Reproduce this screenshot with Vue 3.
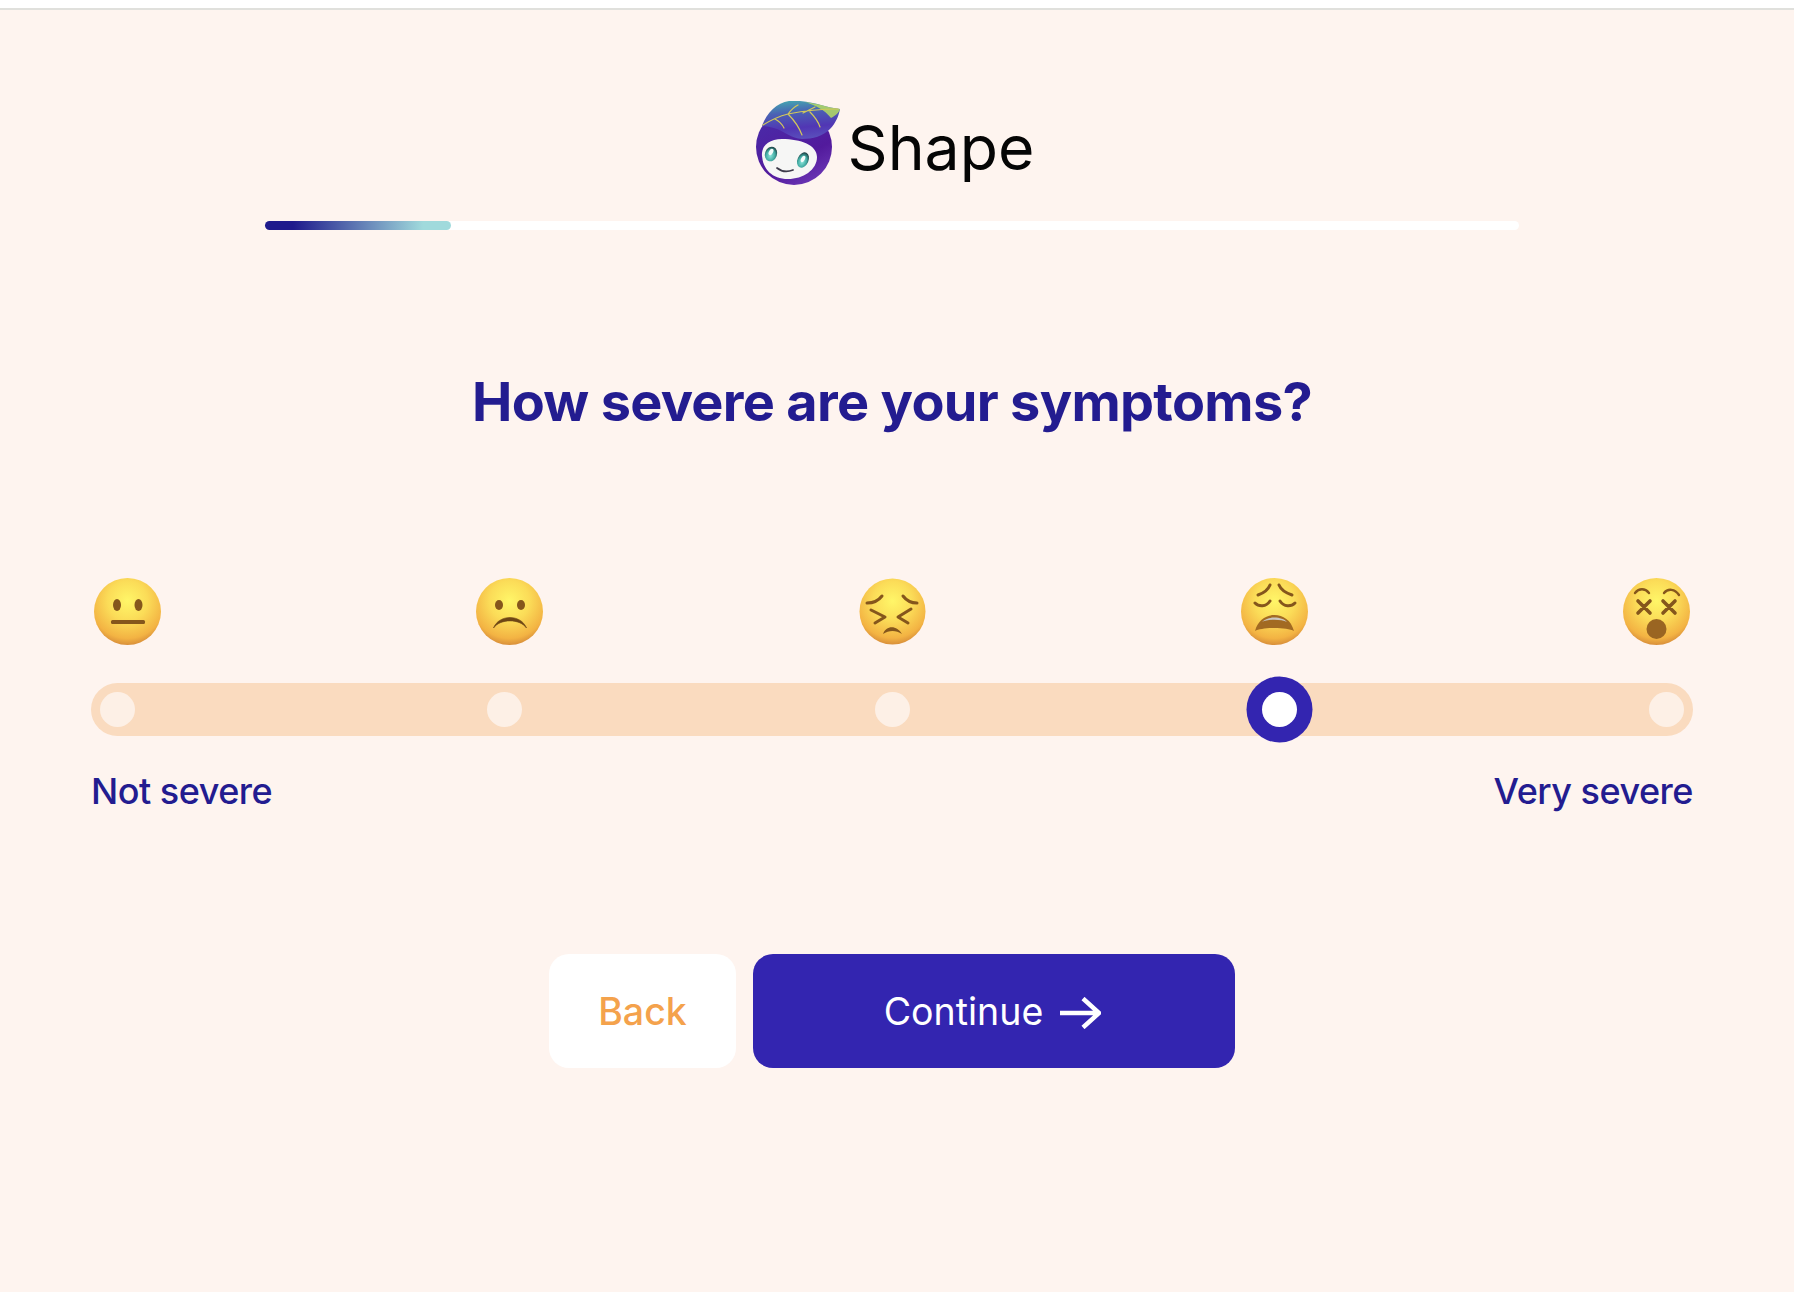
<script setup>
const dots = [0, 1, 2, 3, 4]
const activeDot = 3
</script>

<template>
  <div class="page">
    <div class="topbar"></div>
    <main class="main">
      <header class="brand">
        <svg class="logo" viewBox="0 0 85 84" width="85" height="84" aria-hidden="true">
          <defs>
            <linearGradient id="ballG" x1="0.2" y1="0.1" x2="0.7" y2="1">
              <stop offset="0" stop-color="#4a2aa8" />
              <stop offset="0.65" stop-color="#521a9c" />
              <stop offset="1" stop-color="#6a35b4" />
            </linearGradient>
            <linearGradient id="leafG" x1="0.35" y1="0" x2="0.55" y2="1">
              <stop offset="0" stop-color="#45a3b0" />
              <stop offset="0.3" stop-color="#4a62b4" />
              <stop offset="0.7" stop-color="#5136b4" />
              <stop offset="1" stop-color="#5a50bc" />
            </linearGradient>
            <radialGradient id="eyeG" cx="0.5" cy="0.62" r="0.6">
              <stop offset="0" stop-color="#8ce6dc" />
              <stop offset="0.65" stop-color="#3fa8a0" />
              <stop offset="1" stop-color="#1c3f42" />
            </radialGradient>
          </defs>
          <circle cx="39" cy="46" r="38" fill="url(#ballG)" />
          <path d="M7 25 C12 11 22 2 34 0 C48 -1 58 2 66 4 C72 6 79 7 85 8 C84 14 81 22 75 28 C68 35 58 38 47 38 C36 37 30 31 22 28 C16 26 11 25 7 25Z" fill="url(#leafG)" />
          <path d="M85 8 C79 7 72 6 66 4 C62 3 56 2 50 1 C60 4 70 9 76 17 C80 15 84 12 85 8Z" fill="#b4dc62" opacity=".85" />
          <path d="M8 24 C16 19 25 15 33 13 C48 10 66 8 83 8 M33 13 C36 9 39 6 43 4 M33 13 C39 19 44 26 47 34 M48 12 C52 10 56 8 60 6 M55 11 C59 15 63 20 65 26 M20 18 C24 20 27 23 29 27" fill="none" stroke="#d2c85a" stroke-width="1.200" stroke-linecap="round" />
          <path d="M7 55 C6 45 14 38 27 38 C46 38 62 44 62 56 C62 69 48 78 33 78 C17 78 8 68 7 55Z" fill="#f6f6f5" />
          <ellipse cx="16" cy="53" rx="6" ry="7.500" transform="rotate(20 16 53)" fill="url(#eyeG)" />
          <ellipse cx="16" cy="51" rx="2" ry="3.400" transform="rotate(30 16 51)" fill="#f3fbfa" />
          <ellipse cx="48" cy="59" rx="5.500" ry="8" transform="rotate(25 48 59)" fill="url(#eyeG)" />
          <ellipse cx="48" cy="58" rx="1.800" ry="3.400" transform="rotate(30 48 58)" fill="#f3fbfa" />
          <path d="M22 67 C27 71 33 71 38 69" fill="none" stroke="#3d3a4a" stroke-width="1.700" stroke-linecap="round" />
        </svg>
        <span class="brand-name">Shape</span>
      </header>

      <div class="progress">
        <div class="progress-fill"></div>
      </div>

      <h1 class="title">How severe are your symptoms?</h1>

      <div class="emojis">
        <svg class="emoji" viewBox="0 0 67 67" aria-hidden="true">
          <defs>
            <radialGradient id="faceG" cx="0.5" cy="0.34" r="0.66">
              <stop offset="0" stop-color="#fff668" />
              <stop offset="0.45" stop-color="#fbdc58" />
              <stop offset="0.85" stop-color="#f3b343" />
              <stop offset="1" stop-color="#d98f3a" />
            </radialGradient>
          </defs>
          <circle cx="33.5" cy="33.5" r="33.5" fill="url(#faceG)" />
          <ellipse cx="23" cy="27" rx="4" ry="6" fill="#85561c" />
          <ellipse cx="44.5" cy="27" rx="4" ry="6" fill="#85561c" />
          <rect x="17" y="42" width="34" height="4" rx="1.5" fill="#85561c" />
        </svg>
        <svg class="emoji" viewBox="0 0 67 67" aria-hidden="true">
          <circle cx="33.5" cy="33.5" r="33.5" fill="url(#faceG)" />
          <ellipse cx="23" cy="27" rx="4" ry="5" fill="#85561c" />
          <ellipse cx="45" cy="27" rx="4" ry="5" fill="#85561c" />
          <path d="M17.500 50 C23 36 45 36 50.500 50 C44 40.500 24 40.500 17.500 50Z" fill="#6e4615" stroke="#6e4615" stroke-width=".6" />
        </svg>
        <svg class="emoji" viewBox="0 0 67 67" aria-hidden="true">
          <circle cx="33.5" cy="33.5" r="33" fill="url(#faceG)" />
          <g fill="none" stroke="#85561c" stroke-width="3" stroke-linecap="round" stroke-linejoin="round">
            <path d="M8 25 C14 25 20 22 23 18" />
            <path d="M44 18 C47 22 52 25 58 25" />
            <path d="M12 32 L26 39 L16 45" />
            <path d="M52 31 L39 39 L49 45" />
          </g>
          <path d="M24 56 C27 47 38 47 43 56 C37 52 30 52 24 56Z" fill="#85561c" />
        </svg>
        <svg class="emoji" viewBox="0 0 67 67" aria-hidden="true">
          <circle cx="33.5" cy="33.5" r="33.5" fill="url(#faceG)" />
          <g fill="none" stroke="#85561c" stroke-width="3" stroke-linecap="round">
            <path d="M17 17 C23 15 27 12 29 7" />
            <path d="M38 7 C40 12 45 15 51 17" />
            <path d="M14 25 C18 29 25 29 29 23" />
            <path d="M39 23 C43 29 50 29 54 25" />
          </g>
          <path d="M14 53 C17 42 25 37 33.500 37 C42 37 50 42 53 53 C46 49 21 49 14 53Z" fill="#a26a22" />
          <path d="M21 44 C26 38 41 38 46 44 C40 41 27 41 21 44Z" fill="#c9c6c0" />
        </svg>
        <svg class="emoji" viewBox="0 0 67 67" aria-hidden="true">
          <circle cx="33.5" cy="33.5" r="33.5" fill="url(#faceG)" />
          <g fill="none" stroke="#85561c" stroke-linecap="round">
            <path d="M12 15 C16 10 22 10 26 15" stroke-width="2.400" />
            <path d="M41 15 C45 10 52 11 56 17" stroke-width="2.400" />
            <path d="M15 23 L27 35 M27 23 L15 35 M40 23 L52 35 M52 23 L40 35" stroke-width="3.600" />
          </g>
          <circle cx="33.500" cy="51" r="10" fill="#9a6522" />
        </svg>
      </div>

      <div class="track">
        <span v-for="d in dots" :key="d" class="dot" :class="{ 'dot-active': d === activeDot }"></span>
      </div>

      <div class="labels">
        <span>Not severe</span>
        <span>Very severe</span>
      </div>

      <div class="actions">
        <button class="btn btn-back" type="button">Back</button>
        <button class="btn btn-next" type="button">
          Continue
          <svg class="arrow" viewBox="0 0 41 32" width="41" height="32" aria-hidden="true">
            <path d="M0 16 H38 M23 1.500 L39 16 L23 30.500" fill="none" stroke="#fff" stroke-width="4.500" />
          </svg>
        </button>
      </div>
    </main>
  </div>
</template>

<style>
html, body { margin: 0; background: #fef4ef; }
</style>

<style scoped>
.page {
  min-height: 1292px;
  background: #fef4ef;
  font-family: Inter, "Noto Sans", sans-serif;
}
.topbar {
  height: 8px;
  background: #fff;
  border-bottom: 2px solid #e0e0dc;
}
.main {
  display: flex;
  flex-direction: column;
  align-items: center;
  padding-right: 10px;
}
.brand {
  display: flex;
  align-items: center;
  gap: 8px;
  margin-top: 91px;
  margin-left: 5px;
  height: 84px;
}
.logo { display: block; }
.brand-name {
  font-size: 62.5px;
  line-height: 84px;
  color: #050505;
  font-weight: 400;
  position: relative;
  top: 4px;
}
.progress {
  width: 1254px;
  height: 9px;
  margin-top: 36px;
  background: #fff;
  border-radius: 5px;
}
.progress-fill {
  width: 186px;
  height: 100%;
  border-radius: 5px;
  background: linear-gradient(90deg, #1f1a8c 15%, #a0dadc 85%);
}
.title {
  margin: 140px 0 0;
  font-size: 54px;
  line-height: 64px;
  font-weight: 700;
  letter-spacing: -0.7px;
  color: #231c90;
  white-space: nowrap;
}
.emojis {
  width: 1596px;
  display: flex;
  justify-content: space-between;
  margin-top: 144px;
}
.emoji { width: 67px; height: 67px; display: block; }
.track {
  width: 1602px;
  height: 53px;
  box-sizing: border-box;
  margin-top: 38px;
  padding: 0 9px;
  display: flex;
  align-items: center;
  justify-content: space-between;
  background: #fadbbf;
  border-radius: 27px;
}
.dot {
  width: 35px;
  height: 35px;
  border-radius: 50%;
  background: #fdf0e6;
}
.dot-active {
  background: #fff;
  box-shadow: 0 0 0 15.5px #3325b0;
}
.labels {
  width: 1602px;
  display: flex;
  justify-content: space-between;
  margin-top: 33px;
  font-size: 36px;
  line-height: 44px;
  font-weight: 500;
  letter-spacing: -0.5px;
  color: #231c90;
}
.actions {
  display: flex;
  gap: 17px;
  margin-top: 141px;
}
.btn {
  height: 114px;
  border: 0;
  border-radius: 20px;
  font-family: inherit;
  font-size: 37.5px;
  display: flex;
  align-items: center;
  justify-content: center;
}
.btn-back {
  width: 187px;
  background: #fff;
  color: #f4a24c;
  font-weight: 500;
}
.btn-next {
  width: 482px;
  gap: 17px;
  padding: 0 3px 0 0;
  background: #3325b0;
  color: #fff;
  font-weight: 400;
}
.arrow { display: block; margin-top: 3px; }
</style>
